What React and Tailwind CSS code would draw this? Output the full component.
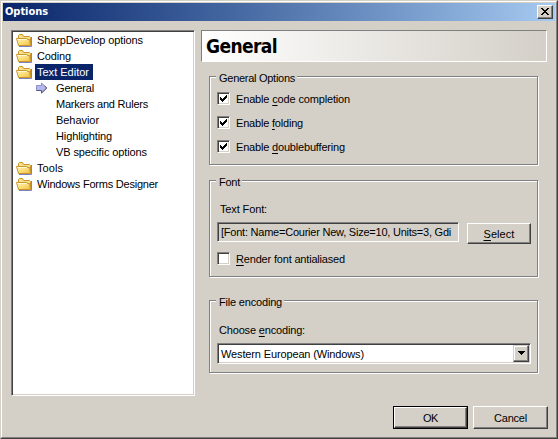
import { useLayoutEffect, useRef } from "react";

// One line of UI text whose letter-spacing is tuned so that it fills `w` pixels.
function T({ w, children, className = "" }) {
  const ref = useRef(null);
  useLayoutEffect(() => {
    const el = ref.current;
    el.style.letterSpacing = "0px";
    const n = el.textContent.length;
    el.style.letterSpacing = (w - el.getBoundingClientRect().width) / n + "px";
  }, [w]);
  return (
    <span ref={ref} className={"inline-block whitespace-pre " + className}>
      {children}
    </span>
  );
}

const U = ({ children }) => (
  <span className="underline decoration-1 underline-offset-2">{children}</span>
);

function Folder() {
  return (
    <svg width="16" height="16" viewBox="0 0 16 16" className="block shrink-0">
      <defs>
        <linearGradient id="fg" x1="0" y1="0" x2="1" y2="1">
          <stop offset="0" stopColor="#fff3b8" />
          <stop offset="0.5" stopColor="#fbdf7c" />
          <stop offset="1" stopColor="#eebb3c" />
        </linearGradient>
      </defs>
      <path d="M3 14.5H15.5V5" stroke="#8083b8" fill="none" />
      <path d="M2.5 13V3.5L3.5 2.5H6.5L7.5 4.5H13.5L14.5 5.5V13Z" fill="#f9e08a" stroke="#c8962c" />
      <path d="M.5 6.5H10.5L12 7.5H13.5L14.5 13.5H2.5Z" fill="url(#fg)" stroke="#c8962c" />
      <path d="M1.5 7.5H10.5" stroke="#fffbe0" />
    </svg>
  );
}

function Arrow() {
  return (
    <svg width="12" height="12" viewBox="0 0 12 12" className="block">
      <path d="M.5 3.5H5.5V1L10.8 6L5.5 11V8.5H.5Z" fill="#b4b8ee" stroke="#8d90cc" />
      <path d="M.5 8.5H5.5V11L10.8 6L8.5 3.8" fill="none" stroke="#54567c" />
    </svg>
  );
}

function Row({ label, w, selected }) {
  return (
    <div className="flex h-4 items-center pl-[3px]">
      <Folder />
      <div
        className={
          "ml-[3px] flex h-4 items-center pl-[2px] " +
          (selected ? "w-[58px] bg-[#0a246a] text-white" : "")
        }
      >
        <T w={w}>{label}</T>
      </div>
    </div>
  );
}

function Child({ label, w, active }) {
  return (
    <div className="flex h-4 items-center pl-[23px]">
      <div className="w-5">{active && <Arrow />}</div>
      <T w={w}>{label}</T>
    </div>
  );
}

function Group({ title, w, className, children }) {
  return (
    <fieldset
      className={
        "relative ml-2 w-[329px] border border-[#808080] shadow-[1px_1px_0_#fff,inset_1px_1px_0_#fff] " +
        className
      }
    >
      <div className="absolute -top-[6px] left-[6px] bg-[#d4d0c8] pr-[2px] pl-[3px] leading-[14px]">
        <T w={w}>{title}</T>
      </div>
      {children}
    </fieldset>
  );
}

const sunken =
  "border border-t-[#808080] border-l-[#808080] border-r-white border-b-white shadow-[inset_1px_1px_0_#404040,inset_-1px_-1px_0_#d4d0c8] ";
const raised =
  "border border-t-white border-l-white border-r-[#404040] border-b-[#404040] shadow-[inset_-1px_-1px_0_#808080] bg-[#d4d0c8] ";

function Check({ checked, w, children }) {
  return (
    <label className="flex h-[13px] items-center">
      <span className={sunken + "block h-[13px] w-[13px] bg-white"}>
        {checked && (
          <svg width="11" height="11" viewBox="0 0 11 11" shapeRendering="crispEdges" className="block">
            <path d="M2 4h1v1h1v1h1v-1h1v-1h1v-1h1v-1h1v3h-1v1h-1v1h-1v1h-1v1h-1v-1h-1v-1h-1z" fill="#000" />
          </svg>
        )}
      </span>
      <span className="ml-[6px]">
        <T w={w}>{children}</T>
      </span>
    </label>
  );
}

export default function App() {
  return (
    <div className="h-[439px] w-[558px] overflow-hidden border border-t-[#d4d0c8] border-r-[#404040] border-b-[#404040] border-l-[#d4d0c8] bg-[#d4d0c8] font-['Liberation_Sans',Arial,sans-serif] text-[11px] leading-[16px] text-black">
      <div className="h-full border border-t-white border-r-[#808080] border-b-[#808080] border-l-white p-px">
        <div className="flex h-[18px] items-center justify-between bg-linear-to-r from-[#0a246a] to-[#a6caf0] pr-[2px] pl-[2px]">
          <T w={43} className="font-['DejaVu_Sans_Condensed','DejaVu_Sans',sans-serif] text-[11px] font-bold text-white">
            Options
          </T>
          <div className={raised + "flex h-[14px] w-4 pt-[2px] pl-[3px]"}>
            <svg width="8" height="7" viewBox="0 0 8 7" shapeRendering="crispEdges" className="block">
              <path d="M0 0h2v1h1v1h2v-1h1v-1h2v1h-1v1h-1v1h-1v1h1v1h1v1h1v1h-2v-1h-1v-1h-2v1h-1v1h-2v-1h1v-1h1v-1h1v-1h-1v-1h-1v-1h-1z" />
            </svg>
          </div>
        </div>

        <div className="flex pt-[9px] pl-2">
          <div className={sunken + "h-[366px] w-[184px] bg-white p-px"}>
            <Row label="SharpDevelop options" w={106} />
            <Row label="Coding" w={34} />
            <Row label="Text Editor" w={52} selected />
            <Child label="General" w={38} active />
            <Child label="Markers and Rulers" w={92} />
            <Child label="Behavior" w={43} />
            <Child label="Highlighting" w={56} />
            <Child label="VB specific options" w={91} />
            <Row label="Tools" w={26} />
            <Row label="Windows Forms Designer" w={121} />
          </div>

          <div className="ml-[6px] w-[346px]">
            <div className="flex h-8 items-center border border-t-[#808080] border-r-white border-b-white border-l-[#808080] bg-linear-to-r from-white to-[#d4d0c8] pl-1">
              <T w={71} className="font-['DejaVu_Sans_Condensed','DejaVu_Sans',sans-serif] text-[19px] leading-[30px] font-bold">
                General
              </T>
            </div>

            <Group title="General Options" w={76} className="mt-[14px] h-[89px] pt-[15px] pl-[7px]">
              <div className="flex flex-col gap-[11px]">
                <Check checked w={114}>Enable <U>c</U>ode completion</Check>
                <Check checked w={67}>Enable <U>f</U>olding</Check>
                <Check checked w={109}>Enable <U>d</U>oublebuffering</Check>
              </div>
            </Group>

            <Group title="Font" w={21} className="mt-[15px] h-[97px] pt-[20px] pl-[7px]">
              <div className="h-4 pl-[3px]">
                <T w={47}>Text Font:</T>
              </div>
              <div className="mt-[5px] flex gap-2">
                <div className={sunken + "flex h-5 w-[242px] items-center pl-[3px]"}>
                  <T w={230}>[Font: Name=Courier New, Size=10, Units=3, Gdi</T>
                </div>
                <div className={raised + "mt-px flex h-[21px] w-16 items-center justify-center"}>
                  <T w={31}><U>S</U>elect</T>
                </div>
              </div>
              <div className="mt-2">
                <Check w={109}><U>R</U>ender font antialiased</Check>
              </div>
            </Group>

            <Group title="File encoding" w={63} className="mt-[23px] h-[73px] pt-[21px] pl-[7px]">
              <div className="h-4 pl-[2px]">
                <T w={86}>Choose <U>e</U>ncoding:</T>
              </div>
              <div className={sunken + "mt-[5px] flex h-[21px] w-[314px] items-center justify-between bg-white pr-px pl-[3px]"}>
                <T w={143}>Western European (Windows)</T>
                <div className="flex h-[17px] w-4 justify-center border border-t-[#d4d0c8] border-r-[#404040] border-b-[#404040] border-l-[#d4d0c8] bg-[#d4d0c8] pt-[5px] shadow-[inset_-1px_-1px_0_#808080,inset_1px_1px_0_#fff]">
                  <svg width="7" height="4" viewBox="0 0 7 4" shapeRendering="crispEdges" className="block">
                    <path d="M0 0h7v1h-1v1h-1v1h-1v1h-1v-1h-1v-1h-1v-1h-1z" />
                  </svg>
                </div>
              </div>
            </Group>
          </div>
        </div>

        <div className="mt-[10px] flex justify-end gap-[5px] pr-[7px]">
          <div className="h-[23px] w-[75px] border border-black">
            <div className={raised + "flex h-full items-center justify-center"}>
              <T w={15}>OK</T>
            </div>
          </div>
          <div className={raised + "flex h-[23px] w-[75px] items-center justify-center"}>
            <T w={33}>Cancel</T>
          </div>
        </div>
      </div>
    </div>
  );
}
